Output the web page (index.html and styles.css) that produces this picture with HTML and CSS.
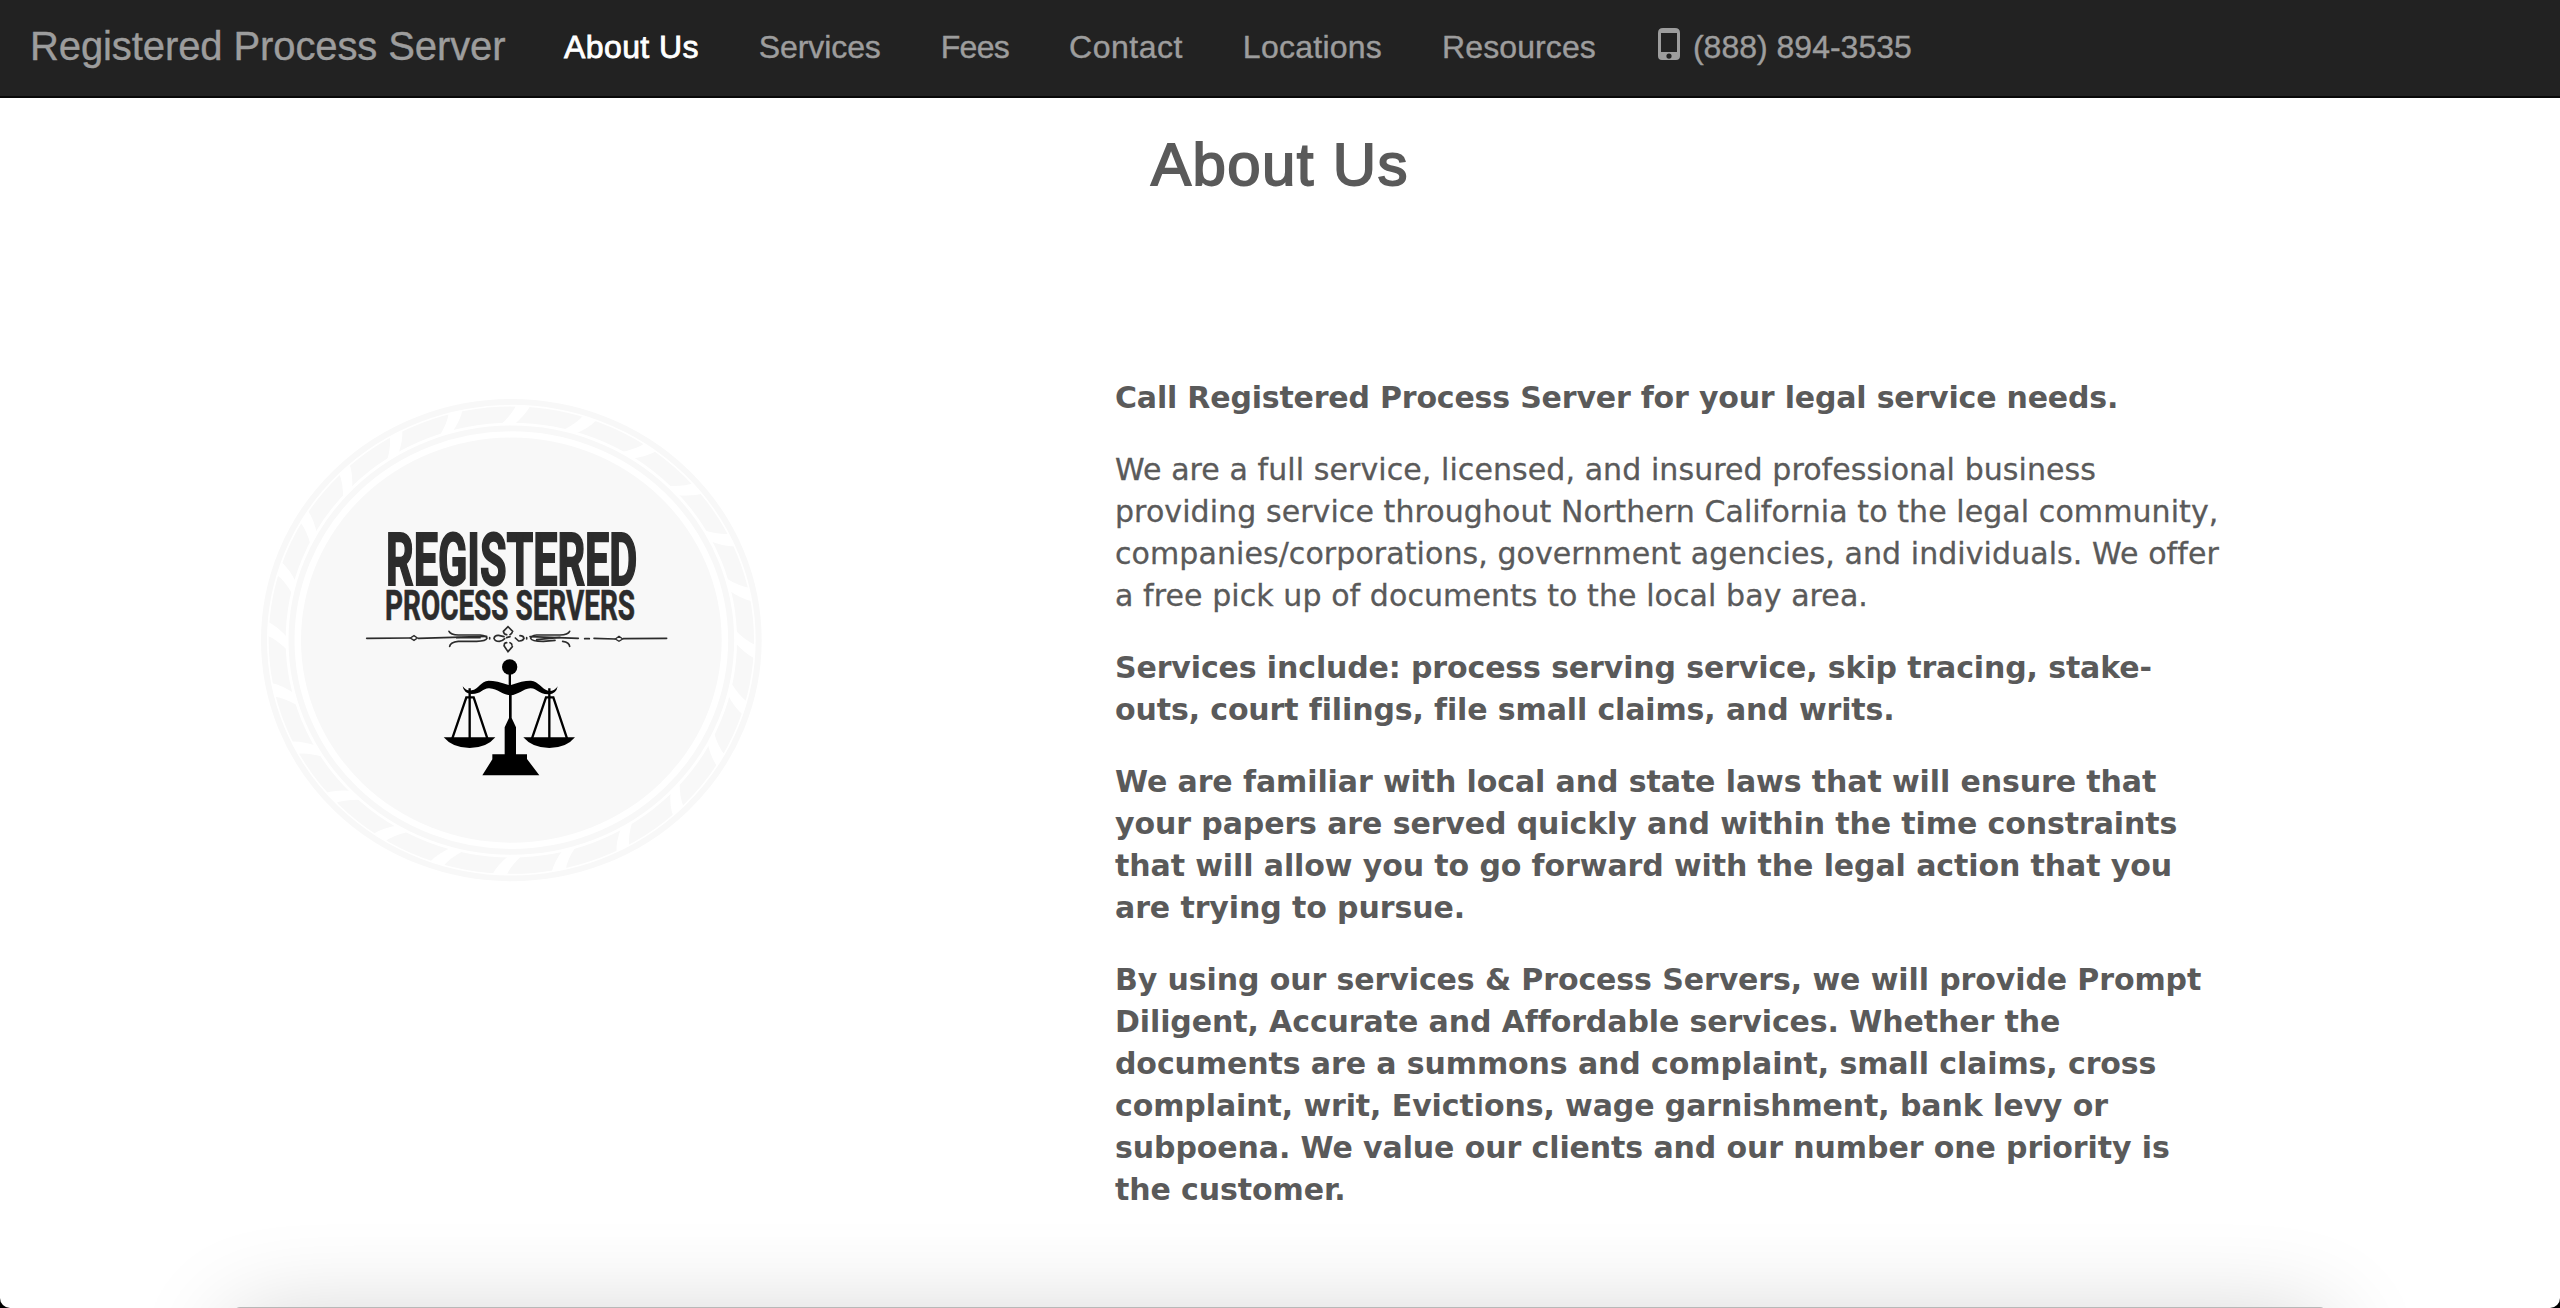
FILE: index.html
```html
<!DOCTYPE html>
<html lang="en">
<head>
<meta charset="utf-8">
<title>About Us - Registered Process Server</title>
<link rel="stylesheet" href="styles.css">
</head>
<body>
<div class="page">
  <nav class="navbar">
    <a class="brand">Registered Process Server</a>
    <ul class="menu">
      <li class="active">About Us</li>
      <li class="services">Services</li>
      <li class="fees">Fees</li>
      <li class="contact">Contact</li>
      <li class="locations">Locations</li>
      <li class="resources">Resources</li>
      <li class="phone"><svg class="phone-icon" viewBox="0 0 22 32"><path fill-rule="evenodd" d="M5 0H17Q22 0 22 5V28Q22 32 18 32H4Q0 32 0 28V5Q0 0 5 0ZM3 5V24H19V5ZM11 25.5A2.6 2.6 0 1 0 11 30.7A2.6 2.6 0 1 0 11 25.5Z"/></svg><span>(888) 894-3535</span></li>
    </ul>
  </nav>
  <h1 class="title">About Us</h1>
  <main class="content">
    <svg class="seal" viewBox="0 0 1560 1500">
      <defs><path id="gap" d="M-46-668Q-8-705 2-734H46Q30-700-8-668Z"/></defs>
      <g transform="translate(784 753.5) scale(1 .963)">
        <circle r="702.5" fill="none" stroke="#f8f8f8" stroke-width="51"/>
        <g fill="#fff">
          <use href="#gap" transform="rotate(1)"/><use href="#gap" transform="rotate(17)"/><use href="#gap" transform="rotate(33)"/><use href="#gap" transform="rotate(48)"/>
          <use href="#gap" transform="rotate(63)"/><use href="#gap" transform="rotate(77)"/><use href="#gap" transform="rotate(91)"/><use href="#gap" transform="rotate(105)"/>
          <use href="#gap" transform="rotate(119)"/><use href="#gap" transform="rotate(135)"/><use href="#gap" transform="rotate(151)"/><use href="#gap" transform="rotate(167)"/>
          <use href="#gap" transform="rotate(181)"/><use href="#gap" transform="rotate(196)"/><use href="#gap" transform="rotate(211)"/><use href="#gap" transform="rotate(226)"/>
          <use href="#gap" transform="rotate(241)"/><use href="#gap" transform="rotate(256)"/><use href="#gap" transform="rotate(271)"/><use href="#gap" transform="rotate(286)"/>
          <use href="#gap" transform="rotate(300)"/><use href="#gap" transform="rotate(315)"/><use href="#gap" transform="rotate(330)"/><use href="#gap" transform="rotate(345)"/>
        </g>
        <circle r="742" fill="none" stroke="#f8f8f8" stroke-width="18"/>
        <circle r="659.5" fill="none" stroke="#f8f8f8" stroke-width="18"/>
        <circle r="631" fill="#f8f8f8"/>
      </g>
      <text class="seal-name" x="408" y="589" font-size="217" textLength="754" lengthAdjust="spacingAndGlyphs">REGISTERED</text>
      <text class="seal-sub" x="405" y="694" font-size="128" textLength="750" lengthAdjust="spacingAndGlyphs">PROCESS SERVERS</text>
      <g fill="none" stroke="#2c2c2c" stroke-width="5" stroke-linecap="round">
        <path d="M350 748L480 747M505 748L710 742M840 743L985 748M1004 749H1018M1032 748L1095 750M1120 749L1250 748"/>
        <path d="M481 747L492 740L502 747L492 754ZM1096 750L1107 742L1118 750L1107 757Z" stroke-width="4"/>
        <path d="M597 727Q602 737 625 738H690Q711 740 711 748Q708 757 680 757L625 757Q600 760 599 772M620 746H690"/>
        <path d="M959 727Q954 737 930 738H860Q842 740 842 748Q844 757 880 757L915 754M938 757Q958 760 959 772M860 752L930 745"/>
        <path d="M760 727L774 713L788 727M760 727Q762 737 770 737M788 727Q786 734 780 737M762 770L774 788L787 773M763 769Q762 761 770 761M786 769Q786 763 780 761M732 748Q734 738 746 739L762 743M732 748Q734 757 748 757Q758 756 764 749M822 748Q820 740 810 740M822 748Q819 757 806 756L796 747M770 746L780 743M719 746V750M830 746V750"/>
      </g>
      <g fill="#000">
        <circle cx="779" cy="834" r="23"/>
        <path d="M776 852H783V888Q820 874 843 875C865 876 875 900 896 906Q914 907 923 892Q919 915 896 916C865 917 862 897 841 898C818 900 805 918 781 919C757 918 744 900 718 898C698 897 696 915 665 915Q641 913 638 892Q649 907 665 904C686 900 692 877 716 875Q740 875 776 888Z"/>
        <path d="M777 915H785V987L798 1015V1096H831V1110L868 1159H697L727 1111V1096H764V1015L777 987Z"/>
        <path d="M581 1045H736Q710 1077 659 1077Q608 1077 581 1045Z"/>
        <path d="M820 1045H975Q949 1077 898 1077Q847 1077 820 1045Z"/>
      </g>
      <path d="M607 1048L649 925H671L712 1048M659 898V1048M846 1048L888 925H910L951 1048M898 898V1048" fill="none" stroke="#000" stroke-width="7"/>
    </svg>
    <div class="copy">
      <p class="lead"><b>Call Registered Process Server for your legal service needs.</b></p>
      <p class="intro">We are a full service, licensed, and insured professional business<br>providing service throughout Northern California to the legal community,<br>companies/corporations, government agencies, and individuals. We offer<br>a free pick up of documents to the local bay area.</p>
      <p class="offer"><b>Services include: process serving service, skip tracing, stake-<br>outs, court filings, file small claims, and writs.</b></p>
      <p><b>We are familiar with local and state laws that will ensure that<br>your papers are served quickly and within the time constraints<br>that will allow you to go forward with the legal action that you<br>are trying to pursue.</b></p>
      <p><b>By using our services &amp; Process Servers, we will provide Prompt<br>Diligent, Accurate and Affordable services. Whether the<br>documents are a summons and complaint, small claims, cross<br>complaint, writ, Evictions, wage garnishment, bank levy or<br>subpoena. We value our clients and our number one priority is<br>the customer.</b></p>
    </div>
  </main>
  <div class="window-shadow"></div>
</div>
</body>
</html>
```
FILE: styles.css
```css
* { box-sizing: border-box; }
html { background: #000; }
body { margin: 0; font-family: "Liberation Sans", Arial, sans-serif; }
.page { position: relative; height: 1308px; overflow: hidden; background: #fff; border-radius: 0 0 10px 10px; color: #5a5a5a; }
.navbar { display: flex; height: 98px; padding-left: 28px; background: #222; border-bottom: 2px solid #080808; color: #9d9d9d; }
.brand { width: 506px; padding-left: 2px; font-size: 40px; line-height: 92px; letter-spacing: -.1px; white-space: nowrap; -webkit-text-stroke: .4px; }
.menu { display: flex; margin: 0; padding: 0; list-style: none; font-size: 32px; line-height: 94px; white-space: nowrap; -webkit-text-stroke: .4px; }
.menu li { padding: 0 30px; }
.menu .active { color: #fff; -webkit-text-stroke: .8px #fff; letter-spacing: .4px; }
.services { letter-spacing: -.1px; }
.fees { letter-spacing: -.7px; }
.contact { letter-spacing: .5px; }
.locations { letter-spacing: .25px; }
.resources { letter-spacing: .1px; }
.phone { display: flex; }
.phone-icon { width: 22px; height: 32px; margin: 28px 13px 0 2px; fill: #9d9d9d; }
.title { margin: 27px 0 0; text-align: center; font-size: 60px; line-height: 80px; font-weight: 400; letter-spacing: 1.4px; -webkit-text-stroke: 1.8px #5a5a5a; }
.content { display: flex; padding: 184px 0 0 250px; }
.seal { width: 520px; height: 500px; flex: none; }
.seal text { font-family: "Liberation Sans Narrow", Roboto, sans-serif; font-weight: 700; fill: #2c2c2c; stroke: #2c2c2c; }
.seal-name { stroke-width: 6px; }
.seal-sub { stroke-width: 2px; }
.copy { margin-left: 345px; margin-top: -12px; font-family: "DejaVu Sans", Verdana, sans-serif; font-size: 30px; line-height: 42px; letter-spacing: -.1px; white-space: nowrap; }
.copy p { margin: 0 0 30px; }
.copy .lead { letter-spacing: -.19px; }
.copy .intro { letter-spacing: .08px; -webkit-text-stroke: .3px; }
.copy .offer { letter-spacing: -.13px; }
.window-shadow { position: absolute; left: 234px; right: 234px; top: 1307px; height: 100px; background: #b8b8b8; border-radius: 6px; box-shadow: 0 14px 100px rgba(0, 0, 0, .2); }
```
